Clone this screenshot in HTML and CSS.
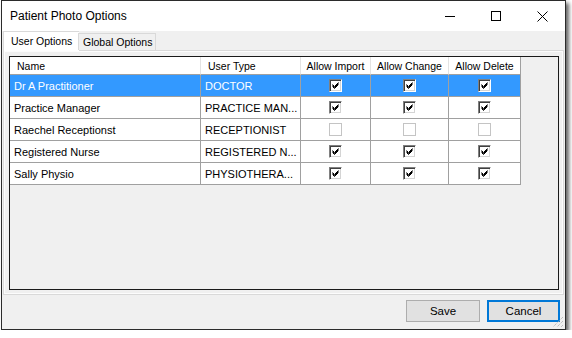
FILE: index.html
```html
<!DOCTYPE html>
<html lang="en">
<head>
  <meta charset="UTF-8" />
  <title>Patient Photo Options</title>
  <link rel="stylesheet" href="styles.css">
</head>
<body>
  <div class="window">
    <div class="titlebar">
      <span class="title">Patient Photo Options</span>
      <div class="controls">
        <span class="ctl"><svg width="10" height="10" viewBox="0 0 10 10"><path d="M0 5.5H10" stroke="#000" stroke-width="1"/></svg></span>
        <span class="ctl"><svg width="10" height="10" viewBox="0 0 10 10"><rect x="0.5" y="0.5" width="9" height="9" fill="none" stroke="#000"/></svg></span>
        <span class="ctl"><svg width="11" height="11" viewBox="0 0 11 11"><path d="M0.5 0.5L10.5 10.5M10.5 0.5L0.5 10.5" stroke="#000" stroke-width="1"/></svg></span>
      </div>
    </div>

    <div class="tabs">
      <div class="tab active">User Options</div>
      <div class="tab">Global Options</div>
    </div>

    <div class="panel">
      <div class="grid">
        <div class="row head">
          <div class="cell">Name</div>
          <div class="cell">User Type</div>
          <div class="cell mid">Allow Import</div>
          <div class="cell mid">Allow Change</div>
          <div class="cell mid">Allow Delete</div>
        </div>
        <div class="row selected">
          <div class="cell">Dr A Practitioner</div>
          <div class="cell">DOCTOR</div>
          <div class="cell mid"><span class="chk on"></span></div>
          <div class="cell mid"><span class="chk on"></span></div>
          <div class="cell mid"><span class="chk on"></span></div>
        </div>
        <div class="row">
          <div class="cell">Practice Manager</div>
          <div class="cell">PRACTICE MAN...</div>
          <div class="cell mid"><span class="chk on"></span></div>
          <div class="cell mid"><span class="chk on"></span></div>
          <div class="cell mid"><span class="chk on"></span></div>
        </div>
        <div class="row">
          <div class="cell">Raechel Receptionst</div>
          <div class="cell">RECEPTIONIST</div>
          <div class="cell mid"><span class="chk off"></span></div>
          <div class="cell mid"><span class="chk off"></span></div>
          <div class="cell mid"><span class="chk off"></span></div>
        </div>
        <div class="row">
          <div class="cell">Registered Nurse</div>
          <div class="cell">REGISTERED N...</div>
          <div class="cell mid"><span class="chk on"></span></div>
          <div class="cell mid"><span class="chk on"></span></div>
          <div class="cell mid"><span class="chk on"></span></div>
        </div>
        <div class="row">
          <div class="cell">Sally Physio</div>
          <div class="cell">PHYSIOTHERA...</div>
          <div class="cell mid"><span class="chk on"></span></div>
          <div class="cell mid"><span class="chk on"></span></div>
          <div class="cell mid"><span class="chk on"></span></div>
        </div>
      </div>
    </div>

    <div class="footer">
      <button class="btn">Save</button>
      <button class="btn default">Cancel</button>
      <svg class="grip" width="12" height="12" viewBox="0 0 12 12">
        <path d="M11 1L1 11M11 5L5 11M11 9L9 11" stroke="#a8a8a8" stroke-width="1" stroke-dasharray="1 1"/>
      </svg>
    </div>
  </div>
</body>
</html>
```

FILE: styles.css
```css
body {
  margin: 0;
  background-color: #fff;
  font-family: 'Liberation Sans', Arial, sans-serif;
  font-size: 11px;
  color: #000;
}

.window {
  position: relative;
  box-sizing: border-box;
  width: 565px;
  height: 330px;
  margin-left: 1px;
  border: 1px solid #2b2b2b;
  background-color: #f0f0f0;
  box-shadow: 3px 3px 4px rgba(0, 0, 0, 0.6);
  display: flex;
  flex-direction: column;
}

/* title bar */
.titlebar {
  height: 30px;
  background-color: #fff;
  display: flex;
  align-items: center;
  justify-content: space-between;
}

.title {
  padding-left: 8px;
  font-size: 12px;
  padding-bottom: 1px;
}

.controls {
  display: flex;
  height: 100%;
}

.ctl {
  width: 46px;
  display: flex;
  align-items: center;
  justify-content: center;
}

/* tabs */
.tabs {
  display: flex;
  align-items: flex-end;
  height: 19px;
  padding-left: 1px;
  position: relative;
  z-index: 1;
  font-size: 10.5px;
}

.tab {
  box-sizing: border-box;
  height: 17px;
  border: 1px solid #d9d9d9;
  border-bottom: none;
  background-color: #f0f0f0;
  padding: 2px 0 0 4px;
  width: 78px;
  margin-left: -1px;
  white-space: nowrap;
}

.tab.active {
  height: 20px;
  width: 76px;
  margin-left: 0;
  margin-bottom: -1px;
  background-color: #fff;
  padding: 3px 0 0 7px;
  border-right: none;
}

/* panel + grid */
.panel {
  box-sizing: border-box;
  width: 561px;
  height: 245px;
  margin-left: 1px;
  border: 1px solid #d9d9d9;
  box-shadow: inset 0 0 0 1px #fcfcfc;
  padding: 5px 4px 4px 5px;
}

.grid {
  box-sizing: border-box;
  height: 234px;
  border: 1px solid #1a1a1a;
  background-color: #f0f0f0;
}

.row {
  display: grid;
  grid-template-columns: 191px 100px 70px 78px 72px;
  height: 22px;
}

.cell {
  box-sizing: border-box;
  border-right: 1px solid #a0a0a0;
  border-bottom: 1px solid #a0a0a0;
  background-color: #fff;
  padding: 0 0 0 4px;
  display: flex;
  align-items: center;
  white-space: nowrap;
  overflow: hidden;
}

.cell.mid {
  justify-content: center;
  padding: 0;
}

.row.head {
  height: 18px;
  font-size: 10.5px;
}

.head .cell {
  padding-left: 7px;
  padding-top: 1px;
  border-right-color: #e3e3e3;
}

.head .cell.mid {
  padding-left: 0;
}

.head .cell:last-child {
  border-right-color: #a0a0a0;
}

.selected .cell {
  background-color: #3399ff;
  color: #fff;
}

/* checkboxes */
.chk {
  box-sizing: border-box;
  width: 13px;
  height: 13px;
  background-color: #fff;
  border: 1px solid;
  border-color: #808080 #fff #fff #808080;
  box-shadow: inset 1px 1px 0 #404040, inset -1px -1px 0 #d4d4d4;
  margin-top: -1px;
}

.chk.on {
  background: #fff url("data:image/svg+xml,%3Csvg xmlns='http://www.w3.org/2000/svg' width='11' height='11'%3E%3Cpath d='M2.5 4.5L4.5 6.5L8.5 2.5M2.5 5.5L4.5 7.5L8.5 3.5M2.5 6.5L4.5 8.5L8.5 4.5' stroke='%23000' stroke-width='1' fill='none'/%3E%3C/svg%3E") no-repeat 0 0;
}

.chk.off {
  border-color: #c4c4c4;
  box-shadow: none;
}

/* footer */
.footer {
  flex: 1;
  display: flex;
  justify-content: flex-end;
  align-items: flex-start;
  gap: 7px;
  padding: 5px 5px 0 0;
}

.btn {
  box-sizing: border-box;
  width: 74px;
  height: 22px;
  background-color: #e1e1e1;
  border: 1px solid #adadad;
  font-family: 'Liberation Sans', Arial, sans-serif;
  font-size: 11.5px;
  color: #000;
  padding: 0;
}

.btn.default {
  width: 73px;
  border: 2px solid #0078d7;
}

.grip {
  position: absolute;
  right: 1px;
  bottom: 1px;
}
```
